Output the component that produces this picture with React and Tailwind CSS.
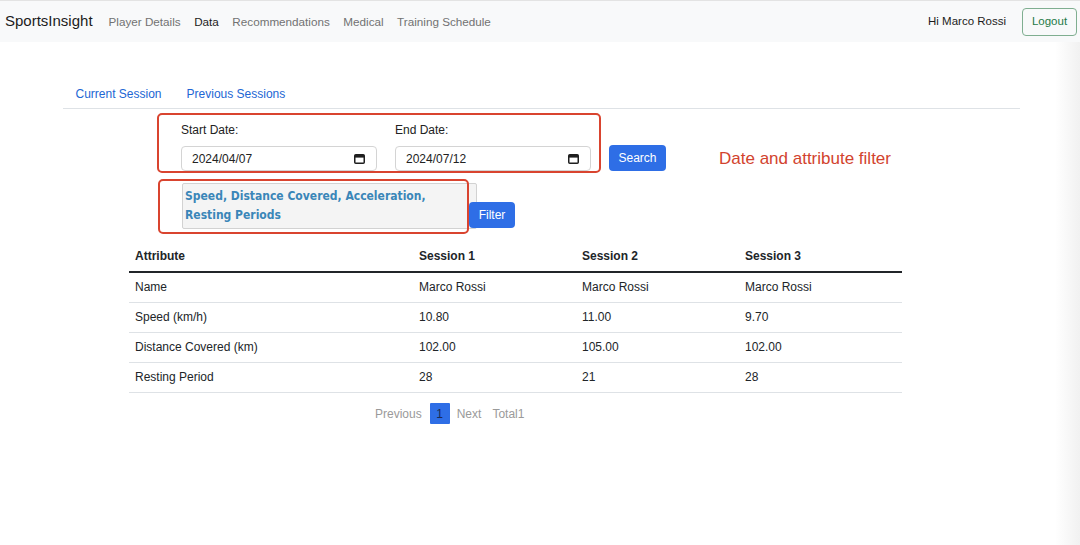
import React from 'react';

const rows = [
  { label: 'Name', values: ['Marco Rossi', 'Marco Rossi', 'Marco Rossi'] },
  { label: 'Speed (km/h)', values: ['10.80', '11.00', '9.70'] },
  { label: 'Distance Covered (km)', values: ['102.00', '105.00', '102.00'] },
  { label: 'Resting Period', values: ['28', '21', '28'] },
];

const CalendarIcon = () => (
  <svg width="11" height="11" viewBox="0 0 11 11">
    <rect x="0.75" y="1.75" width="9.5" height="8.5" rx="1" fill="none" stroke="#1f1f1f" strokeWidth="1.5" />
    <rect x="1" y="2" width="9" height="2.6" fill="#1f1f1f" />
  </svg>
);

const DateField = ({ label, value }) => (
  <div className="flex flex-col">
    <span className="text-[12px] leading-[15px] text-[#222] mt-[1px] mb-[8px]">{ label }</span>
    <div className="w-[196px] h-[26px] border border-[#d4d4d4] rounded-[4px] bg-white flex items-center justify-between pl-[10px] pr-[11px]">
      <span className="text-[12px] text-[#222]">{ value }</span>
      <CalendarIcon />
    </div>
  </div>
);

export default function App() {
  return (
    <div className="relative min-h-screen w-full bg-white overflow-hidden font-['Liberation_Sans',Arial,sans-serif] text-[#212529]">
      {/* navbar */}
      <nav className="h-[42px] border-t border-[#e3e3e3] bg-[#f8f9fa] flex items-center pl-[5px] pr-[3px]">
        <span className="text-[15px] text-[#1c1c1c] mr-[16px]">SportsInsight</span>
        <div className="flex items-center gap-[13.5px] text-[11.7px] text-[#727272]">
          <span>Player Details</span>
          <span className="text-[#1c1c1c]">Data</span>
          <span>Recommendations</span>
          <span>Medical</span>
          <span>Training Schedule</span>
        </div>
        <div className="ml-auto flex items-center">
          <span className="text-[11.5px] text-[#1c1c1c] mr-[16px]">Hi Marco Rossi</span>
          <button className="w-[55px] h-[28px] border border-[#7fae90] rounded-[4px] text-[11.5px] text-[#1e7a48]">
            Logout
          </button>
        </div>
      </nav>

      <div className="ml-[63px] w-[957px] mt-[37px]">
        {/* tabs */}
        <div className="flex border-b border-[#dee2e6] h-[30px] items-center text-[12px] text-[#2166d4]">
          <span className="px-[12.5px]">Current Session</span>
          <span className="px-[12.5px]">Previous Sessions</span>
        </div>

        {/* date filter */}
        <div className="flex items-end mt-[4px] ml-[94px]">
          <div className="flex gap-[18px] border-2 border-[#d9442f] rounded-[5px] pl-[22px] pr-[8px] pt-[7px] pb-0 h-[60px]">
            <DateField label="Start Date:" value="2024/04/07" />
            <DateField label="End Date:" value="2024/07/12" />
          </div>
          <button className="ml-[8px] mb-[2px] w-[57px] h-[26px] rounded-[4px] bg-[#2e6ee6] text-white text-[12px]">
            Search
          </button>
          <span className="ml-[53px] mb-[2px] text-[17px] text-[#d2432e]">Date and attribute filter</span>
        </div>

        {/* attribute filter */}
        <div className="relative flex items-end mt-[10px] ml-[119px]">
          <div className="w-[295px] h-[46px] bg-[#f4f4f4] border border-[#d2d2d2] rounded-[2px] pl-[2px] pt-[3px] font-['DejaVu_Sans_Condensed','DejaVu_Sans',Verdana,sans-serif] font-bold text-[12px] leading-[19px] text-[#3a86b8]">
            Speed, Distance Covered, Acceleration,<br />Resting Periods
          </div>
          <button className="relative z-10 -ml-[8px] mb-[1px] w-[46px] h-[26px] rounded-[4px] bg-[#2e6ee6] text-white text-[12px]">
            Filter
          </button>
          <div className="absolute left-[-24px] top-[-4px] w-[311px] h-[55px] border-2 border-[#d9442f] rounded-[5px] pointer-events-none" />
        </div>

        {/* table */}
        <table className="ml-[66px] mt-[13px] w-[773px] border-collapse text-[12px]">
          <thead>
            <tr className="border-b-2 border-[#212529]">
              <th className="w-[284px] text-left font-bold px-[6px] py-[7px] leading-[15px]">Attribute</th>
              <th className="w-[163px] text-left font-bold px-[6px] py-[7px] leading-[15px]">Session 1</th>
              <th className="w-[163px] text-left font-bold px-[6px] py-[7px] leading-[15px]">Session 2</th>
              <th className="w-[163px] text-left font-bold px-[6px] py-[7px] leading-[15px]">Session 3</th>
            </tr>
          </thead>
          <tbody>
            { rows.map((row) => (
              <tr key={ row.label } className="border-b border-[#dee2e6]">
                <td className="px-[6px] py-[7px] leading-[15px]">{ row.label }</td>
                { row.values.map((v, i) => (
                  <td key={ i } className="px-[6px] py-[7px] leading-[15px]">{ v }</td>
                )) }
              </tr>
            )) }
          </tbody>
        </table>

        {/* pagination */}
        <div className="flex items-center ml-[312px] mt-[10px] text-[12px] text-[#9a9a9a]">
          <span>Previous</span>
          <span className="ml-[8px] w-[20px] h-[21px] bg-[#2e6ee6] text-[#1a2a55] flex items-center justify-center rounded-[1px]">1</span>
          <span className="ml-[7px]">Next</span>
          <span className="ml-[11px]">Total1</span>
        </div>
      </div>

      <div className="absolute right-0 top-[42px] bottom-0 w-[25px] bg-linear-to-r from-white to-[#f1f1f1] pointer-events-none" />
    </div>
  );
}
